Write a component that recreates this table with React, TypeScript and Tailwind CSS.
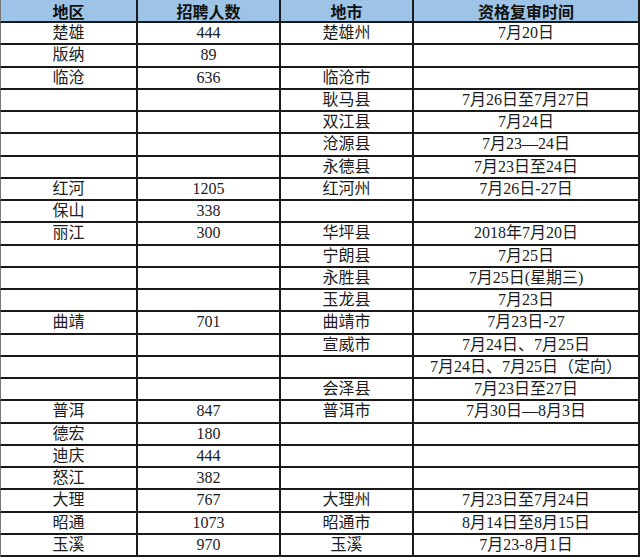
const rows: [string, string, string, string][] = [
  ['楚雄', '444', '楚雄州', '7月20日'],
  ['版纳', '89', '', ''],
  ['临沧', '636', '临沧市', ''],
  ['', '', '耿马县', '7月26日至7月27日'],
  ['', '', '双江县', '7月24日'],
  ['', '', '沧源县', '7月23—24日'],
  ['', '', '永德县', '7月23日至24日'],
  ['红河', '1205', '红河州', '7月26日-27日'],
  ['保山', '338', '', ''],
  ['丽江', '300', '华坪县', '2018年7月20日'],
  ['', '', '宁朗县', '7月25日'],
  ['', '', '永胜县', '7月25日(星期三)'],
  ['', '', '玉龙县', '7月23日'],
  ['曲靖', '701', '曲靖市', '7月23日-27'],
  ['', '', '宣威市', '7月24日、7月25日'],
  ['', '', '', '7月24日、7月25日（定向）'],
  ['', '', '会泽县', '7月23日至27日'],
  ['普洱', '847', '普洱市', '7月30日—8月3日'],
  ['德宏', '180', '', ''],
  ['迪庆', '444', '', ''],
  ['怒江', '382', '', ''],
  ['大理', '767', '大理州', '7月23日至7月24日'],
  ['昭通', '1073', '昭通市', '8月14日至8月15日'],
  ['玉溪', '970', '玉溪', '7月23-8月1日'],
];

const headers = ['地区', '招聘人数', '地市', '资格复审时间'];

export default function App() {
  return (
    <div className="w-[640px] h-[557px] bg-white overflow-hidden">
      <div className="grid grid-cols-[138px_143px_133px_226px] grid-rows-[23px_repeat(24,1fr)] h-full">
        {headers.map((h, i) => (
          <div
            key={h}
            className={`flex items-center justify-center bg-[#9dc3e6] border-b-2 border-r-2 border-[#1a1a1a] text-[16px] font-bold text-[#111] leading-none ${i === 0 ? 'border-l border-l-[#777]' : ''}`}
            style={{ fontFamily: '"Noto Sans CJK SC", sans-serif' }}
          >
            {h}
          </div>
        ))}
        {rows.map((r, ri) =>
          r.map((c, ci) => (
            <div
              key={`${ri}-${ci}`}
              className={`flex items-center justify-center border-b-2 border-r-2 border-[#1a1a1a] text-[16px] text-[#1c1c1c] leading-none whitespace-nowrap ${ci === 0 ? 'border-l border-l-[#777]' : ''}`}
              style={{ fontFamily: '"Liberation Serif", "Noto Sans CJK SC", serif' }}
            >
              {c}
            </div>
          ))
        )}
      </div>
    </div>
  );
}
